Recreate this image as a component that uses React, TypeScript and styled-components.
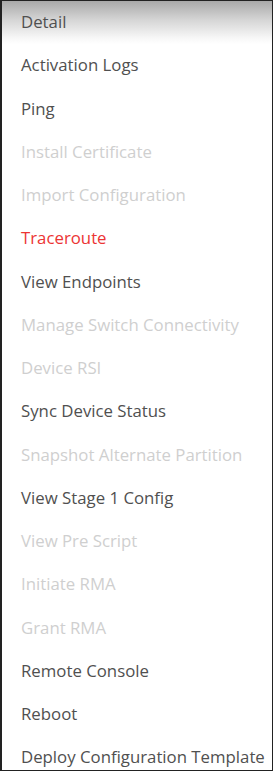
import React from "react";
import styled, { createGlobalStyle } from "styled-components";

const Global = createGlobalStyle`
  html, body { margin: 0; padding: 0; background: #fff; }
  body { font-family: "Open Sans", "Liberation Sans", sans-serif; }
`;

const Menu = styled.ul`
  list-style: none;
  margin: 0;
  padding: 0;
  width: 273px;
  height: 771px;
  box-sizing: border-box;
  border: 1px solid #222;
  border-left-width: 2px;
  background: #fff;
  overflow: hidden;
`;

type Tone = "normal" | "disabled" | "danger";

const Item = styled.li<{ $tone: Tone; $active?: boolean }>`
  height: 43.25px;
  display: flex;
  align-items: center;
  padding-left: 19px;
  padding-bottom: 2px;
  box-sizing: border-box;
  font-size: 16.8px;
  white-space: nowrap;
  color: ${(p) =>
    p.$tone === "disabled" ? "#cfcfcf" : p.$tone === "danger" ? "#ec3434" : "#505050"};
  background: ${(p) =>
    p.$active ? "linear-gradient(to bottom, #a9a9a9 0%, #d6d6d6 45%, #f6f6f6 85%, #ffffff 100%)" : "transparent"};
`;

const items: { label: string; tone: Tone; active?: boolean }[] = [
  { label: "Detail", tone: "normal", active: true },
  { label: "Activation Logs", tone: "normal" },
  { label: "Ping", tone: "normal" },
  { label: "Install Certificate", tone: "disabled" },
  { label: "Import Configuration", tone: "disabled" },
  { label: "Traceroute", tone: "danger" },
  { label: "View Endpoints", tone: "normal" },
  { label: "Manage Switch Connectivity", tone: "disabled" },
  { label: "Device RSI", tone: "disabled" },
  { label: "Sync Device Status", tone: "normal" },
  { label: "Snapshot Alternate Partition", tone: "disabled" },
  { label: "View Stage 1 Config", tone: "normal" },
  { label: "View Pre Script", tone: "disabled" },
  { label: "Initiate RMA", tone: "disabled" },
  { label: "Grant RMA", tone: "disabled" },
  { label: "Remote Console", tone: "normal" },
  { label: "Reboot", tone: "normal" },
  { label: "Deploy Configuration Template", tone: "normal" },
];

export default function App() {
  return (
    <>
      <Global />
      <Menu>
        {items.map((it) => (
          <Item key={it.label} $tone={it.tone} $active={it.active}>
            {it.label}
          </Item>
        ))}
      </Menu>
    </>
  );
}
